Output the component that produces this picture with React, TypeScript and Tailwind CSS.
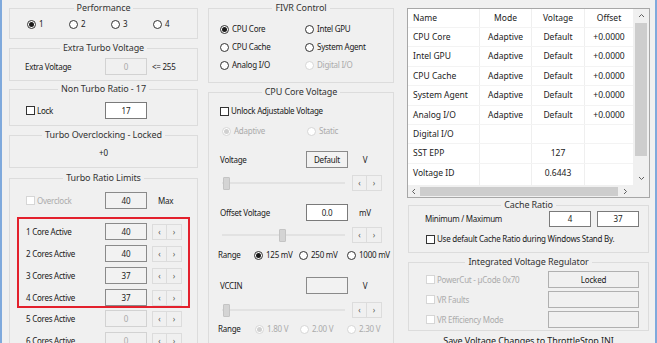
import React from "react";

type Variant = "white" | "gray" | "disabled" | "plain";

function Radio({ checked = false, disabled = false }: { checked?: boolean; disabled?: boolean }) {
  return (
    <span
      className={`flex h-[9px] w-[9px] shrink-0 items-center justify-center rounded-full border bg-white ${
        disabled ? "border-[#d6d6d6]" : "border-[#333333]"
      }`}
    >
      {checked && (
        <span className={`h-[5px] w-[5px] rounded-full ${disabled ? "bg-[#d0d0d0]" : "bg-[#1a1a1a]"}`} />
      )}
    </span>
  );
}

function Check({ disabled = false }: { disabled?: boolean }) {
  return (
    <span
      className={`block h-[9px] w-[9px] shrink-0 border bg-white ${
        disabled ? "border-[#d6d6d6]" : "border-[#333333]"
      }`}
    />
  );
}

function Box({
  v = "",
  variant = "gray",
  w = "w-[42px]",
  h = "h-[17px]",
}: {
  v?: string;
  variant?: Variant;
  w?: string;
  h?: string;
}) {
  const cls =
    variant === "white"
      ? "border-[#7a7a7a] bg-white text-[#1a1a1a]"
      : variant === "gray"
      ? "border-[#8a8a8a] bg-[#f2f2f2] text-[#1a1a1a]"
      : variant === "plain"
      ? "border-[#b0b0b0] bg-[#f0f0f0] text-[#1a1a1a]"
      : "border-[#d2d2d2] bg-[#f0f0f0] text-[#a8a8a8]";
  return (
    <div
      className={`flex shrink-0 items-center justify-center border text-[8px] leading-none tracking-[-0.2px] ${cls} ${w} ${h}`}
    >
      {v}
    </div>
  );
}

function Spinner() {
  return (
    <div className="flex h-[16px] shrink-0">
      <div className="flex w-[15px] items-center justify-center border border-[#dcdcdc] text-[8px] leading-none text-[#555]">
        ‹
      </div>
      <div className="flex w-[15px] items-center justify-center border border-l-0 border-[#dcdcdc] text-[8px] leading-none text-[#555]">
        ›
      </div>
    </div>
  );
}

function Slider({ pos }: { pos: number }) {
  return (
    <div className="flex h-[16px] w-[123px] items-center">
      <div className="h-[2px] bg-[#e2e2e2]" style={{ width: pos }} />
      <div className="h-[13px] w-[7px] shrink-0 rounded-[1px] border border-[#c4c4c4] bg-[#d4d4d4]" />
      <div className="h-[2px] flex-1 bg-[#e2e2e2]" />
    </div>
  );
}

function Group({
  title,
  className = "",
  children,
}: {
  title: string;
  className?: string;
  children?: React.ReactNode;
}) {
  return (
    <div className={`shrink-0 border border-[#dcdcdc] ${className}`}>
      <div className="-mt-[8px] flex h-[13px] justify-center">
        <span className="bg-[#f0f0f0] px-[3px] text-[9px] leading-[13px] tracking-[-0.1px] text-[#333]">{title}</span>
      </div>
      {children}
    </div>
  );
}

function L({ children, gray = false, className = "" }: { children: React.ReactNode; gray?: boolean; className?: string }) {
  return (
    <span
      className={`text-[8px] leading-[12px] tracking-[-0.25px] whitespace-nowrap ${
        gray ? "text-[#ababab]" : "text-[#1a1a1a]"
      } ${className}`}
    >
      {children}
    </span>
  );
}

function CoreRow({ label, v, disabled = false }: { label: string; v: string; disabled?: boolean }) {
  return (
    <div className="flex h-[17px] items-center">
      <L className="w-[79px]">{label}</L>
      <Box v={v} variant={disabled ? "disabled" : "gray"} />
      <div className="ml-[5px]">
        <Spinner />
      </div>
    </div>
  );
}

function LeftCol() {
  return (
    <div className="flex w-[189px] shrink-0 flex-col pt-[8px]">
      <Group title="Performance" className="h-[31px]">
        <div className="mt-[4px] flex h-[12px] items-center pl-[17px]">
          {["1", "2", "3", "4"].map((n, i) => (
            <div key={n} className="flex w-[42px] items-center gap-[3px]">
              <Radio checked={i === 0} />
              <L>{n}</L>
            </div>
          ))}
        </div>
      </Group>

      <Group title="Extra Turbo Voltage" className="mt-[9px] h-[33px]">
        <div className="mt-[4px] flex h-[17px] items-center pl-[15px]">
          <L className="w-[80px]">Extra Voltage</L>
          <Box v="0" variant="disabled" />
          <L className="ml-[5px]">&lt;= 255</L>
        </div>
      </Group>

      <Group title="Non Turbo Ratio - 17" className="mt-[8px] h-[37px]">
        <div className="mt-[7px] flex h-[17px] items-center pl-[16px]">
          <div className="flex w-[79px] items-center gap-[2px]">
            <Check />
            <L>Lock</L>
          </div>
          <Box v="17" variant="white" />
        </div>
      </Group>

      <Group title="Turbo Overclocking - Locked" className="mt-[9px] h-[33px]">
        <div className="mt-[5px] text-center text-[8px] leading-[13px] text-[#1a1a1a]">+0</div>
      </Group>

      <Group title="Turbo Ratio Limits" className="mt-[10px] h-[200px]">
        <div className="mt-[8px] flex h-[17px] items-center pl-[16px]">
          <div className="flex w-[79px] items-center gap-[2px]">
            <Check disabled />
            <L gray>Overclock</L>
          </div>
          <Box v="40" variant="gray" />
          <L className="ml-[11px]">Max</L>
        </div>
        <div className="mx-[7px] mt-[8px] flex flex-col gap-[5px] border-2 border-[#e3202c] pl-[7px] pt-[4px]">
          <CoreRow label="1 Core Active" v="40" />
          <CoreRow label="2 Cores Active" v="40" />
          <CoreRow label="3 Cores Active" v="37" />
          <CoreRow label="4 Cores Active" v="37" />
        </div>
        <div className="mt-[2px] flex flex-col gap-[5px] pl-[16px]">
          <CoreRow label="5 Cores Active" v="0" disabled />
          <CoreRow label="6 Cores Active" v="0" disabled />
        </div>
      </Group>
    </div>
  );
}

function RadioItem({
  label,
  checked = false,
  disabled = false,
  w,
}: {
  label: string;
  checked?: boolean;
  disabled?: boolean;
  w: string;
}) {
  return (
    <div className={`flex items-center gap-[3px] ${w}`}>
      <Radio checked={checked} disabled={disabled} />
      <L gray={disabled}>{label}</L>
    </div>
  );
}

function MidCol() {
  return (
    <div className="ml-[10px] flex w-[186px] shrink-0 flex-col pt-[8px]">
      <Group title="FIVR Control" className="h-[75px]">
        <div className="mt-[9px] flex flex-col gap-[6px] pl-[11px]">
          <div className="flex h-[12px] items-center">
            <RadioItem label="CPU Core" checked w="w-[85px]" />
            <RadioItem label="Intel GPU" w="w-[85px]" />
          </div>
          <div className="flex h-[12px] items-center">
            <RadioItem label="CPU Cache" w="w-[85px]" />
            <RadioItem label="System Agent" w="w-[85px]" />
          </div>
          <div className="flex h-[12px] items-center">
            <RadioItem label="Analog I/O" w="w-[85px]" />
            <RadioItem label="Digital I/O" disabled w="w-[85px]" />
          </div>
        </div>
      </Group>

      <Group title="CPU Core Voltage" className="mt-[9px] h-[260px]">
        <div className="mt-[7px] flex h-[12px] items-center gap-[2px] pl-[11px]">
          <Check />
          <L>Unlock Adjustable Voltage</L>
        </div>
        <div className="mt-[8px] flex h-[12px] items-center pl-[13px]">
          <RadioItem label="Adaptive" checked disabled w="w-[85px]" />
          <RadioItem label="Static" disabled w="w-[60px]" />
        </div>

        <div className="mt-[14px] flex h-[17px] items-center pl-[11px]">
          <L className="w-[86px]">Voltage</L>
          <Box v="Default" variant="gray" />
          <L className="w-[34px] text-center">V</L>
        </div>
        <div className="mt-[7px] flex h-[16px] items-center pl-[13px]">
          <Slider pos={1} />
          <div className="ml-[7px]">
            <Spinner />
          </div>
        </div>

        <div className="mt-[13px] flex h-[17px] items-center pl-[11px]">
          <L className="w-[86px]">Offset Voltage</L>
          <Box v="0.0" variant="white" />
          <L className="w-[34px] text-center">mV</L>
        </div>
        <div className="mt-[6px] flex h-[16px] items-center pl-[13px]">
          <Slider pos={57} />
          <div className="ml-[7px]">
            <Spinner />
          </div>
        </div>

        <div className="mt-[6px] flex h-[12px] items-center pl-[9px]">
          <L className="w-[36px]">Range</L>
          <RadioItem label="125 mV" checked w="w-[45px]" />
          <RadioItem label="250 mV" w="w-[48px]" />
          <RadioItem label="1000 mV" w="w-[45px]" />
        </div>

        <div className="mt-[16px] flex h-[17px] items-center pl-[11px]">
          <L className="w-[86px]">VCCIN</L>
          <Box v="" variant="gray" />
          <L className="w-[34px] text-center">V</L>
        </div>
        <div className="mt-[8px] flex h-[16px] items-center pl-[13px]">
          <Slider pos={1} />
          <div className="ml-[7px]">
            <Spinner />
          </div>
        </div>

        <div className="mt-[5px] flex h-[12px] items-center pl-[9px]">
          <L className="w-[37px]">Range</L>
          <RadioItem label="1.80 V" checked disabled w="w-[45px]" />
          <RadioItem label="2.00 V" disabled w="w-[47px]" />
          <RadioItem label="2.30 V" disabled w="w-[45px]" />
        </div>
      </Group>
    </div>
  );
}

const rows: string[][] = [
  ["CPU Core", "Adaptive", "Default", "+0.0000"],
  ["Intel GPU", "Adaptive", "Default", "+0.0000"],
  ["CPU Cache", "Adaptive", "Default", "+0.0000"],
  ["System Agent", "Adaptive", "Default", "+0.0000"],
  ["Analog I/O", "Adaptive", "Default", "+0.0000"],
  ["Digital I/O", "", "", ""],
  ["SST EPP", "", "127", ""],
  ["Voltage ID", "", "0.6443", ""],
];

function Chevron({ dir }: { dir: "up" | "down" | "left" | "right" }) {
  const d =
    dir === "up"
      ? "M1 4 L3.5 1.5 L6 4"
      : dir === "down"
      ? "M1 2 L3.5 4.5 L6 2"
      : dir === "left"
      ? "M4 1 L1.5 3.5 L4 6"
      : "M2 1 L4.5 3.5 L2 6";
  return (
    <svg width="7" height="7" viewBox="0 0 7 7">
      <path d={d} fill="none" stroke="#606060" strokeWidth="1" />
    </svg>
  );
}

function Table() {
  const cell =
    "flex items-center border-r border-[#efefef] text-[8.5px] leading-none text-[#222] whitespace-nowrap";
  return (
    <div className="mt-[8px] flex h-[190px] w-[243px] flex-col border border-[#a7a7a7] bg-white">
      <div className="flex h-[176px]">
        <div className="flex w-[225px] flex-col">
          <div className="flex h-[18px]">
            <div className={`${cell} w-[72px] pl-[5px]`}>Name</div>
            <div className={`${cell} w-[52px] justify-center`}>Mode</div>
            <div className={`${cell} w-[53px] justify-center`}>Voltage</div>
            <div className={`${cell} w-[48px] justify-center border-r-0`}>Offset</div>
          </div>
          {rows.map((r) => (
            <div key={r[0]} className="flex h-[19.4px] border-t border-[#f3f3f3]">
              <div className={`${cell} w-[72px] pl-[5px]`}>{r[0]}</div>
              <div className={`${cell} w-[52px] justify-center`}>{r[1]}</div>
              <div className={`${cell} w-[53px] justify-center`}>{r[2]}</div>
              <div className={`${cell} w-[48px] justify-center border-r-0`}>{r[3]}</div>
            </div>
          ))}
          <div className="flex flex-1">
            <div className="w-[72px] border-r border-[#efefef]" />
            <div className="w-[52px] border-r border-[#efefef]" />
            <div className="w-[53px] border-r border-[#efefef]" />
          </div>
        </div>
        <div className="flex w-[16px] flex-col bg-[#f0f0f0]">
          <div className="flex h-[14px] items-center justify-center">
            <Chevron dir="up" />
          </div>
          <div className="mx-[2px] h-[133px] bg-[#cdcdcd]" />
          <div className="flex flex-1 items-end justify-center pb-[3px]">
            <Chevron dir="down" />
          </div>
        </div>
      </div>
      <div className="flex h-[12px] bg-[#f0f0f0]">
        <div className="flex w-[225px] items-center">
          <div className="flex w-[12px] justify-center">
            <Chevron dir="left" />
          </div>
          <div className="h-[9px] w-[198px] bg-[#cdcdcd]" />
          <div className="flex flex-1 justify-center">
            <Chevron dir="right" />
          </div>
        </div>
        <div className="w-[16px]" />
      </div>
    </div>
  );
}

function RightCol() {
  return (
    <div className="ml-[13px] flex w-[243px] shrink-0 flex-col">
      <Table />
      <Group title="Cache Ratio" className="ml-[1px] mt-[7px] h-[48px] w-[241px]">
        <div className="flex h-[16px] items-center pl-[16px]">
          <L className="w-[124px]">Minimum / Maximum</L>
          <Box v="4" variant="white" h="h-[16px]" />
          <div className="w-[6px]" />
          <Box v="37" variant="white" h="h-[16px]" />
        </div>
        <div className="mt-[6px] flex h-[12px] items-center gap-[2px] pl-[17px]">
          <Check />
          <L>Use default Cache Ratio during Windows Stand By.</L>
        </div>
      </Group>
      <Group title="Integrated Voltage Regulator" className="ml-[1px] mt-[9px] h-[69px] w-[241px]">
        {[
          ["PowerCut  - µCode 0x70", "Locked"],
          ["VR Faults", ""],
          ["VR Efficiency Mode", ""],
        ].map(([l, v]) => (
          <div key={l} className="mt-[3px] flex h-[17px] items-center pl-[17px]">
            <div className="flex w-[122px] items-center gap-[2px]">
              <Check disabled />
              <L gray>{l}</L>
            </div>
            <Box v={v} variant="plain" w="w-[91px]" />
          </div>
        ))}
      </Group>
      <div className="mt-[3px] text-center text-[9px] leading-[13px] tracking-[-0.1px] text-[#222]">
        Save Voltage Changes to ThrottleStop.INI
      </div>
    </div>
  );
}

export default function App() {
  return (
    <div className="flex h-[343px] w-[657px] overflow-hidden border-l-2 border-r-2 border-[#7fa9dc] bg-[#f0f0f0] pl-[7px] font-['Noto_Sans',sans-serif] text-[#1a1a1a]">
      <LeftCol />
      <MidCol />
      <RightCol />
    </div>
  );
}
